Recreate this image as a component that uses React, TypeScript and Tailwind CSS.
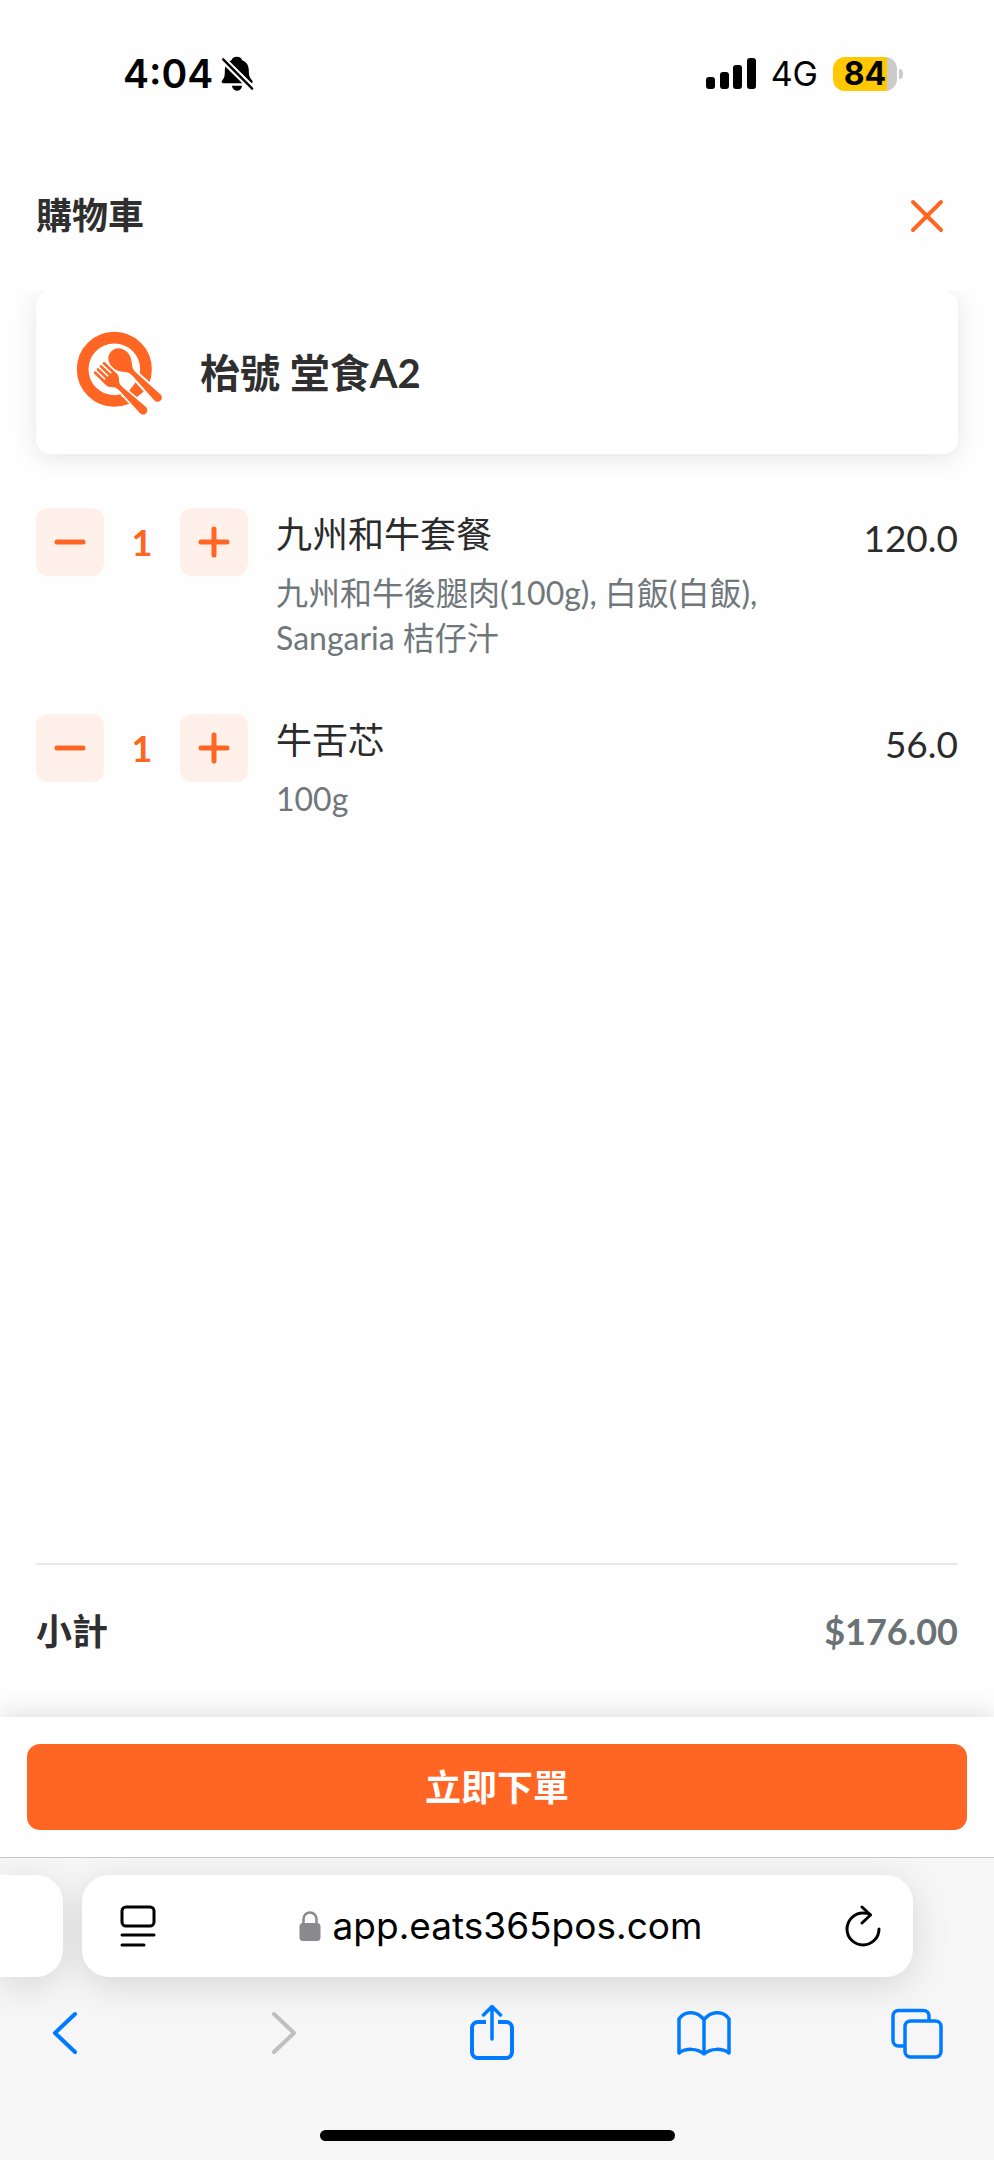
import React, { useState } from 'react';

interface CartItem {
  id: number;
  name: string;
  options: string;
  price: number;
  quantity: number;
}

const initialItems: CartItem[] = [
  { id: 1, name: '九州和牛套餐', options: '九州和牛後腿肉(100g), 白飯(白飯), Sangaria 桔仔汁', price: 120, quantity: 1 },
  { id: 2, name: '牛舌芯', options: '100g', price: 56, quantity: 1 }
];

function BellOffIcon() {
  return (
    <svg className="h-[36px] w-[33px]" viewBox="364 78 98 108" aria-hidden="true">
      <path d="M411 80c-9 0-15 5-16 11-14 5-20 17-20 32 0 16-2 21-7 27-5 6-2 10 4 10h79c7 0 10-4 5-10-6-7-9-11-9-27 0-15-6-27-20-32-1-6-7-11-16-11z" />
      <path d="M396 167h31c-2 10-8 15-15 15s-14-5-16-15z" />
      <path d="M369 88l89 88" stroke="#fff" strokeWidth="20" />
      <path d="M370 88l87 88" stroke="#000" strokeWidth="7" strokeLinecap="round" />
    </svg>
  );
}

function SignalIcon() {
  return (
    <svg className="h-[32px] w-[50px]" viewBox="0 0 50 32" aria-hidden="true">
      <rect x="0" y="19" width="9" height="12" rx="3" />
      <rect x="14" y="14" width="9" height="17" rx="3" />
      <rect x="27" y="7" width="9" height="24" rx="3" />
      <rect x="41" y="0" width="9" height="31" rx="3" />
    </svg>
  );
}

function DishLogo() {
  return (
    <svg className="h-[90px] w-[90px]" viewBox="30 24 270 270" fill="#ff6624" aria-hidden="true">
      <circle cx="148" cy="148" r="95" fill="none" stroke="#ff6624" strokeWidth="35" />
      <path d="M186 190l34-34 50 50-40 62-62-40z" fill="#fff" />
      <path d="M192 213l20-26 26 26-23 19z" />
      {/* spoon */}
      <path
        d="M0 0c21 0 32 18 32 37 0 21-18 33-24 48L7 96l6 100a13 13 0 0 1-26 0L-7 96l-1-11c-6-15-24-27-24-48C-32 18-21 0 0 0z"
        transform="translate(139 94) rotate(-45)"
        stroke="#fff"
        strokeWidth="12"
        paintOrder="stroke"
      />
      {/* fork */}
      <path
        d="M-23 3a4 4 0 0 1 8 0v36h5V3a4 4 0 0 1 8 0v36h5V3a4 4 0 0 1 8 0v36h5V3a4 4 0 0 1 8 0v49c0 15-13 18-16 29l-1 12 6 92a13 13 0 0 1-26 0l6-92-1-12c-3-11-15-14-15-29z"
        transform="translate(101 142) rotate(-46)"
        stroke="#fff"
        strokeWidth="10"
        paintOrder="stroke"
      />
    </svg>
  );
}

function LockIcon() {
  return (
    <svg className="h-[30px] w-[22px]" viewBox="0 0 22 30" fill="none" aria-hidden="true">
      <path d="M4.500 14V8a6.500 6.500 0 0 1 13 0v6" stroke="#8a8a8e" strokeWidth="2.500" />
      <rect x="0.500" y="12" width="21" height="18" rx="3.500" fill="#8a8a8e" />
    </svg>
  );
}

function StatusBar() {
  return (
    <div className="flex h-[147px] items-start justify-between pt-[50px] pr-[91px] pl-[123px] font-['Inter',sans-serif] text-black">
      <div className="flex h-12 items-center gap-2">
        <span className="text-[39px] leading-[48px] font-semibold">4:04</span>
        <BellOffIcon />
      </div>
      <div className="flex h-12 items-center gap-[15px]">
        <SignalIcon />
        <span className="text-[34px] leading-[48px]">4G</span>
        <div className="flex items-center gap-[2px]">
          <div className="flex h-[34px] w-[64px] items-center justify-center rounded-[12px] bg-linear-to-r from-[#ffc800] from-[84%] to-[#cbcbcb] to-[84%] text-[32px] leading-[34px] font-bold">
            84
          </div>
          <div className="h-[10px] w-1 rounded-r-full bg-[#cbcbcb]" />
        </div>
      </div>
    </div>
  );
}

interface StepButtonProps {
  label: string;
  path: string;
  onClick: () => void;
}

function StepButton({ label, path, onClick }: StepButtonProps) {
  return (
    <button
      type="button"
      aria-label={label}
      onClick={onClick}
      className="flex h-[68px] w-[68px] items-center justify-center rounded-xl bg-[#fff0ea]"
    >
      <svg className="h-8 w-8" viewBox="0 0 32 32" fill="none" stroke="#ff6624" strokeWidth="5" strokeLinecap="round">
        <path d={path} />
      </svg>
    </button>
  );
}

interface CartRowProps {
  item: CartItem;
  onChange: (id: number, delta: number) => void;
}

function CartRow({ item, onChange }: CartRowProps) {
  return (
    <li className="flex items-start">
      <div className="flex items-center">
        <StepButton label={`減少 ${item.name}`} path="M3 16h26" onClick={() => onChange(item.id, -1)} />
        <span className="w-[76px] text-center text-4xl font-bold text-[#ff6624]">{item.quantity}</span>
        <StepButton label={`增加 ${item.name}`} path="M3 16h26M16 3v26" onClick={() => onChange(item.id, 1)} />
      </div>
      <div className="ml-7 flex-1">
        <h3 className="text-[36px] leading-[52px] text-[#2b2b2b]">{item.name}</h3>
        <p className="mt-[10px] max-w-[520px] text-[32px] leading-[45px] text-[#6f777b]">{item.options}</p>
      </div>
      <span className="pt-1 text-[37px] leading-[52px] text-[#2b2b2b]">{item.price.toFixed(1)}</span>
    </li>
  );
}

function BrowserBar() {
  return (
    <div className="relative overflow-hidden border-t border-[#c9c9cb] bg-[#f6f6f7] font-['Inter',sans-serif]">
      <div className="flex gap-[19px] pt-[17px] pr-[81px]">
        <div className="h-[102px] w-[63px] rounded-r-[27px] bg-white shadow-[0_8px_36px_rgba(0,0,0,0.13)]" />
        <div className="flex h-[102px] flex-1 items-center justify-between rounded-[27px] bg-white pr-8 pl-[38px] shadow-[0_8px_36px_rgba(0,0,0,0.13)]">
          <button type="button" aria-label="頁面選單">
            <svg className="h-[42px] w-[36px]" viewBox="0 0 36 42" fill="none" stroke="#000" strokeWidth="3" strokeLinecap="round">
              <rect x="2" y="2" width="32" height="19" rx="4" />
              <path d="M2 30h32M2 40h22" />
            </svg>
          </button>
          <button type="button" className="flex items-center gap-3 text-[37px] leading-[48px] text-black">
            <LockIcon />
            app.eats365pos.com
          </button>
          <button type="button" aria-label="重新載入">
            <svg className="h-[42px] w-[36px]" viewBox="0 0 36 42" fill="none" stroke="#000" strokeWidth="3" strokeLinecap="round" strokeLinejoin="round">
              <path d="M34 24a16 16 0 1 1-16-16c3 0 5 .5 7 1.500" />
              <path d="M17 2l8.500 8L17 18" />
            </svg>
          </button>
        </div>
      </div>
      <nav className="flex justify-between pt-[27px] pr-[49px] pl-[37px]">
        <button type="button" aria-label="返回">
          <svg className="h-[60px] w-[56px]" viewBox="0 0 56 60" fill="none" stroke="#007aff" strokeWidth="4" strokeLinecap="round" strokeLinejoin="round">
            <path d="M38 10L18 29l20 19" />
          </svg>
        </button>
        <button type="button" aria-label="前進" disabled>
          <svg className="h-[60px] w-[56px]" viewBox="0 0 56 60" fill="none" stroke="#bfbfc1" strokeWidth="4" strokeLinecap="round" strokeLinejoin="round">
            <path d="M24 10l20 19-20 19" />
          </svg>
        </button>
        <button type="button" aria-label="分享">
          <svg className="h-[60px] w-[56px]" viewBox="0 0 56 60" fill="none" stroke="#007aff" strokeWidth="4" strokeLinecap="round" strokeLinejoin="round">
            <path d="M23 18h-8a6 6 0 0 0-6 6v24a6 6 0 0 0 6 6h28a6 6 0 0 0 6-6V24a6 6 0 0 0-6-6h-8" strokeLinecap="butt" />
            <path d="M29 35V3M20.500 11L29 2.500l8.500 8.500" strokeWidth="3.500" />
          </svg>
        </button>
        <button type="button" aria-label="書籤">
          <svg className="h-[60px] w-[56px]" viewBox="0 0 56 60" fill="none" stroke="#007aff" strokeWidth="3.500" strokeLinejoin="round">
            <path d="M28 16C22 7 9 6 3 15v34c7-5 18-5 25 1 7-6 18-6 25-1V15C47 6 34 7 28 16zM28 16v34" />
          </svg>
        </button>
        <button type="button" aria-label="分頁">
          <svg className="h-[60px] w-[56px]" viewBox="0 0 56 60" fill="none" stroke="#007aff" strokeWidth="3.500" strokeLinejoin="round">
            <rect x="16" y="17" width="36" height="36" rx="5.500" />
            <path d="M40 17v-5a5.500 5.500 0 0 0-5.500-5.500H9.500A5.500 5.500 0 0 0 4 12v24.500A5.500 5.500 0 0 0 9.500 42H16" />
          </svg>
        </button>
      </nav>
      <div className="flex justify-center pt-[66px] pb-[19px]">
        <div className="h-[11px] w-[355px] rounded-full bg-black" />
      </div>
    </div>
  );
}

export default function App() {
  const [items, setItems] = useState<CartItem[]>(initialItems);

  const handleChange = (id: number, delta: number) => {
    setItems(prev => prev.map(i => (i.id === id ? { ...i, quantity: Math.max(0, i.quantity + delta) } : i)));
  };

  const subtotal = items.reduce((sum, i) => sum + i.price * i.quantity, 0);

  return (
    <div className="flex min-h-screen flex-col bg-[#fefefe] font-['Lato','Noto_Sans_CJK_TC',sans-serif]">
      <StatusBar />

      {/* Title section */}
      <header className="flex h-[144px] items-start justify-between pr-[49px] pl-9">
        <h1 className="pt-10 text-[36px] leading-[56px] font-bold text-[#2f2f2f]">購物車</h1>
        <button type="button" aria-label="關閉" className="pt-[51px]">
          <svg className="h-9 w-9" viewBox="0 0 36 36" fill="none" stroke="#ff6624" strokeWidth="4" strokeLinecap="round">
            <path d="M4 4l28 28M32 4L4 32" />
          </svg>
        </button>
      </header>

      {/* Cart content, clips the card shadow at the top */}
      <main className="flex flex-1 flex-col overflow-hidden px-9">
        <section className="flex h-[163px] items-center gap-[35px] rounded-[14px] bg-white pl-[39px] shadow-[0_4px_24px_rgba(0,0,0,0.1)]">
          <DishLogo />
          <h2 className="text-[40px] leading-[56px] font-bold text-[#2f2f2f]">枱號 堂食A2</h2>
        </section>

        <ul className="mt-[54px] flex flex-col gap-[54px]">
          {items.map(item => (
            <CartRow key={item.id} item={item} onChange={handleChange} />
          ))}
        </ul>

        <div className="mt-auto flex h-[154px] items-start justify-between border-t-2 border-[#e7e8eb] pt-10 text-[36px] leading-[52px] font-bold">
          <span className="text-[#2f2f2f]">小計</span>
          <span className="text-[#6a7276]">${subtotal.toFixed(2)}</span>
        </div>
      </main>

      <footer className="relative bg-white px-[27px] py-[27px] shadow-[0_-4px_24px_rgba(0,0,0,0.12)]">
        <button type="button" className="h-[86px] w-full rounded-[13px] bg-[#ff6624] text-[36px] leading-[54px] font-bold text-white">
          立即下單
        </button>
      </footer>

      <BrowserBar />
    </div>
  );
}
